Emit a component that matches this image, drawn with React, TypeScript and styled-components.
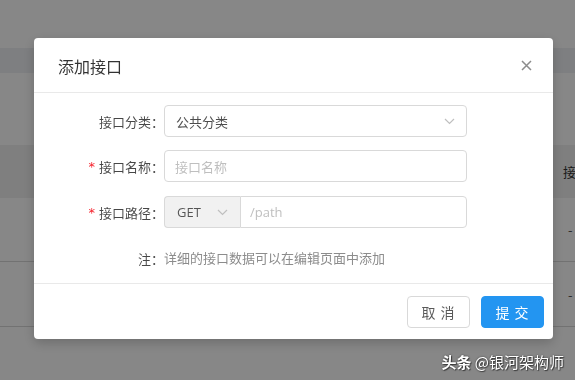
import React, { ReactElement } from 'react';
import styled, { createGlobalStyle } from 'styled-components';

const GlobalStyle = createGlobalStyle`
  html, body {
    margin: 0;
    padding: 0;
    height: 100%;
    overflow: hidden;
    background: #fff;
  }
  body {
    font-family: "Noto Sans CJK SC", "Noto Sans", sans-serif;
    font-size: 13px;
    color: rgba(0, 0, 0, 0.75);
  }
  * {
    box-sizing: border-box;
  }
`;

// page underneath the mask
const Page = styled.div`
  width: 575px;
  height: 380px;
  overflow: hidden;
`;
const TopBar = styled.div`
  height: 48px;
  background: #fff;
`;
const SubBar = styled.div`
  height: 25px;
  background: #eef0f3;
`;
const Spacer = styled.div`
  height: 72px;
`;
const TableHead = styled.div`
  display: grid;
  grid-template-columns: 563px 1fr;
  align-items: center;
  height: 53px;
  background: #f0f0f0;
  color: #333;
  font-size: 13px;
  white-space: nowrap;
  overflow: hidden;
`;
const TableRow = styled.div<{ height: number }>`
  display: grid;
  grid-template-columns: 568px 1fr;
  align-items: center;
  height: ${ props => props.height }px;
  border-bottom: 1px solid #d8d8d8;
  color: #555;
`;

// modal
const Mask = styled.div`
  position: fixed;
  inset: 0;
  background: rgba(0, 0, 0, 0.47);
  padding: 38px 0 0 34px;
`;
const Modal = styled.div`
  width: 519px;
  background: #fff;
  border-radius: 4px;
  box-shadow: 0 4px 12px rgba(0, 0, 0, 0.2);
`;
const Header = styled.div`
  display: flex;
  align-items: center;
  justify-content: space-between;
  height: 55px;
  padding: 0 19px 0 24px;
  border-bottom: 1px solid #e9e9e9;
`;
const Title = styled.div`
  font-size: 16px;
  line-height: 22px;
  color: rgba(0, 0, 0, 0.8);
  padding-top: 1px;
`;
const Close = styled.div`
  display: flex;
  width: 16px;
  height: 16px;
  align-items: center;
  justify-content: center;
`;
const Body = styled.div`
  display: flex;
  flex-direction: column;
  padding: 12px 0 15px;
`;
const FormRow = styled.div<{ gap: number }>`
  display: grid;
  grid-template-columns: 130px 303px;
  align-items: center;
  margin-bottom: ${ props => props.gap }px;
`;
const Label = styled.label`
  display: flex;
  justify-content: flex-end;
  align-items: center;
  color: rgba(0, 0, 0, 0.72);
  font-size: 13px;
  white-space: nowrap;
`;
const Star = styled.span`
  color: #f5222d;
  font-family: "DejaVu Sans", sans-serif;
  font-size: 13px;
  margin-right: 4px;
`;
const Field = styled.div`
  display: flex;
  align-items: center;
  height: 32px;
  border: 1px solid #d9d9d9;
  border-radius: 4px;
  background: #fff;
`;
const Select = styled(Field)`
  justify-content: space-between;
  padding: 0 11px 0 11px;
  color: rgba(0, 0, 0, 0.7);
`;
const Input = styled(Field)`
  padding: 0 10px;
  color: #bfbfbf;
`;
const Group = styled.div`
  display: grid;
  grid-template-columns: 76px 1fr;
  height: 32px;
`;
const Addon = styled.div`
  display: flex;
  align-items: center;
  justify-content: space-between;
  padding: 0 12px 0 12px;
  background: #f1f1f1;
  border: 1px solid #d9d9d9;
  border-right: none;
  border-radius: 4px 0 0 4px;
  color: rgba(0, 0, 0, 0.65);
  font-family: "Open Sans", "Noto Sans", sans-serif;
  font-size: 13px;
`;
const PathInput = styled(Input)`
  border-radius: 0 4px 4px 0;
  font-family: "Open Sans", "Noto Sans", sans-serif;
  padding-left: 9px;
`;
const Note = styled.div`
  color: #8c8c8c;
  font-size: 13px;
  line-height: 20px;
`;
const Footer = styled.div`
  display: flex;
  justify-content: flex-end;
  gap: 11px;
  padding: 12px 9px 11px 16px;
  border-top: 1px solid #e9e9e9;
`;
const Button = styled.button<{ primary?: boolean }>`
  width: 63px;
  height: 32px;
  border-radius: 4px;
  font-family: "Noto Sans CJK SC", sans-serif;
  font-size: 14px;
  letter-spacing: 1px;
  border: 1px solid ${ props => props.primary ? '#2395f1' : '#d9d9d9' };
  background: ${ props => props.primary ? '#2395f1' : '#fff' };
  color: ${ props => props.primary ? '#fff' : 'rgba(0, 0, 0, 0.65)' };
`;
const Watermark = styled.div`
  position: fixed;
  right: 11px;
  bottom: 8px;
  color: #fff;
  font-size: 15px;
  text-shadow: 0 0 2px rgba(0, 0, 0, 0.6), 1px 1px 1px rgba(0, 0, 0, 0.5);
  b {
    font-weight: 700;
  }
`;

function Chevron(): ReactElement {
  return (
    <svg width="11" height="7" viewBox="0 0 11 7">
      <path d="M1 1l4.5 4.5L10 1" fill="none" stroke="#bfbfbf" strokeWidth="1.2" />
    </svg>
  );
}

export default function App(): ReactElement {
  return (
    <>
      <GlobalStyle />
      <Page>
        <TopBar />
        <SubBar />
        <Spacer />
        <TableHead>
          <span />
          <span>接口名称</span>
        </TableHead>
        <TableRow height={ 64 }>
          <span />
          <span>-</span>
        </TableRow>
        <TableRow height={ 65 }>
          <span />
          <span>-</span>
        </TableRow>
      </Page>
      <Mask>
        <Modal>
          <Header>
            <Title>添加接口</Title>
            <Close>
              <svg width="11" height="11" viewBox="0 0 11 11">
                <path d="M1 1l9 9M10 1l-9 9" stroke="#8c8c8c" strokeWidth="1.5" />
              </svg>
            </Close>
          </Header>
          <Body>
            <FormRow gap={ 13 }>
              <Label>接口分类：</Label>
              <Select>
                <span>公共分类</span>
                <Chevron />
              </Select>
            </FormRow>
            <FormRow gap={ 14 }>
              <Label><Star>*</Star>接口名称：</Label>
              <Input>接口名称</Input>
            </FormRow>
            <FormRow gap={ 20 }>
              <Label><Star>*</Star>接口路径：</Label>
              <Group>
                <Addon>
                  <span>GET</span>
                  <Chevron />
                </Addon>
                <PathInput>/path</PathInput>
              </Group>
            </FormRow>
            <FormRow gap={ 0 }>
              <Label>注：</Label>
              <Note>详细的接口数据可以在编辑页面中添加</Note>
            </FormRow>
          </Body>
          <Footer>
            <Button>取 消</Button>
            <Button primary>提 交</Button>
          </Footer>
        </Modal>
      </Mask>
      <Watermark><b>头条</b> @银河架构师</Watermark>
    </>
  );
}
